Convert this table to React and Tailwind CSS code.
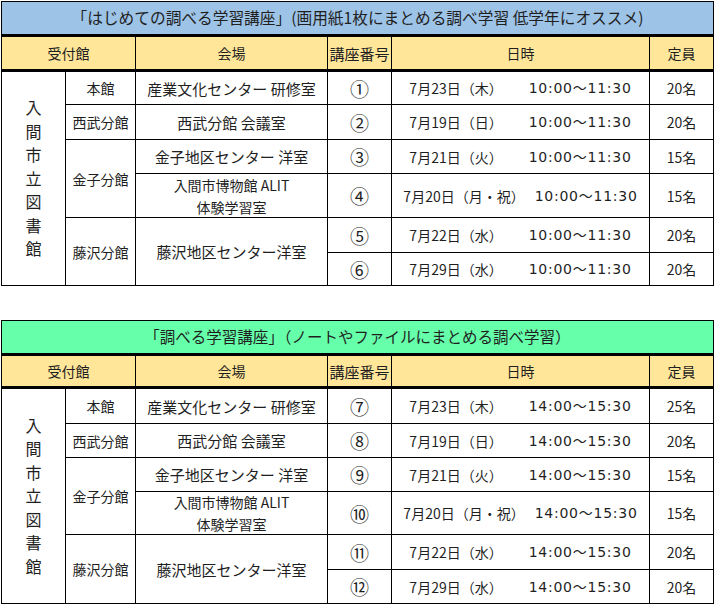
import React from "react";

const rows1 = [
  { num: "①", date: "7月23日（木）", time: "10:00～11:30", cap: "20名" },
  { num: "②", date: "7月19日（日）", time: "10:00～11:30", cap: "20名" },
  { num: "③", date: "7月21日（火）", time: "10:00～11:30", cap: "15名" },
  { num: "④", date: "7月20日（月・祝）", time: "10:00～11:30", cap: "15名", holiday: true },
  { num: "⑤", date: "7月22日（水）", time: "10:00～11:30", cap: "20名" },
  { num: "⑥", date: "7月29日（水）", time: "10:00～11:30", cap: "20名" },
];
const rows2 = [
  { num: "⑦", date: "7月23日（木）", time: "14:00～15:30", cap: "25名" },
  { num: "⑧", date: "7月19日（日）", time: "14:00～15:30", cap: "20名" },
  { num: "⑨", date: "7月21日（火）", time: "14:00～15:30", cap: "15名" },
  { num: "⑩", date: "7月20日（月・祝）", time: "14:00～15:30", cap: "15名", holiday: true },
  { num: "⑪", date: "7月22日（水）", time: "14:00～15:30", cap: "20名" },
  { num: "⑫", date: "7月29日（水）", time: "14:00～15:30", cap: "20名" },
];

const cell = "bg-white flex items-center justify-center";

function Num({ r }) {
  return <div className={`${cell} text-[19px]`}>{r.num}</div>;
}
function DateCell({ r }) {
  return (
    <div className={`${cell} ${r.holiday ? "gap-[10px]" : "gap-[26px]"} text-[14px]`}>
      <span>{r.date}</span>
      <span className="font-['DejaVu_Sans','Noto_Sans_CJK_JP',sans-serif] tracking-[0.75px]">{r.time}</span>
    </div>
  );
}
function Cap({ r }) {
  return <div className={`${cell} text-[14px]`}>{r.cap}</div>;
}

function Table({ title, bg, rows, rowsClass, className, titleSize }) {
  const hdr = "bg-[#FFE699] border-b-2 border-black flex items-center justify-center text-[14px]";
  return (
    <div
      className={`grid grid-cols-[63px_69px_191px_63px_257px_63px] gap-px bg-black p-px w-[713px] ml-px ${rowsClass} ${className}`}
    >
      <div className={`col-span-6 border-b-2 border-black flex items-center justify-center whitespace-nowrap ${titleSize} ${bg}`}>
        {title}
      </div>
      <div className={`${hdr} col-span-2`}>受付館</div>
      <div className={hdr}>会場</div>
      <div className={`${hdr} text-[15px] whitespace-nowrap`}>講座番号</div>
      <div className={hdr}>日時</div>
      <div className={hdr}>定員</div>

      <div className={`${cell} row-span-6 flex-col text-[16px] leading-[23.5px]`}>
        {"入間市立図書館".split("").map((c, i) => (
          <div key={i}>{c}</div>
        ))}
      </div>
      <div className={`${cell} text-[14px]`}>本館</div>
      <div className={`${cell} text-[15px]`}>産業文化センター 研修室</div>
      <Num r={rows[0]} />
      <DateCell r={rows[0]} />
      <Cap r={rows[0]} />

      <div className={`${cell} text-[14px]`}>西武分館</div>
      <div className={`${cell} text-[15px]`}>西武分館 会議室</div>
      <Num r={rows[1]} />
      <DateCell r={rows[1]} />
      <Cap r={rows[1]} />

      <div className={`${cell} row-span-2 text-[14px]`}>金子分館</div>
      <div className={`${cell} text-[15px]`}>金子地区センター 洋室</div>
      <Num r={rows[2]} />
      <DateCell r={rows[2]} />
      <Cap r={rows[2]} />

      <div className={`${cell} flex-col text-[14px] leading-[22px]`}>
        <div>入間市博物館 ALIT</div>
        <div>体験学習室</div>
      </div>
      <Num r={rows[3]} />
      <DateCell r={rows[3]} />
      <Cap r={rows[3]} />

      <div className={`${cell} row-span-2 text-[14px]`}>藤沢分館</div>
      <div className={`${cell} row-span-2 text-[15px]`}>藤沢地区センター洋室</div>
      <Num r={rows[4]} />
      <DateCell r={rows[4]} />
      <Cap r={rows[4]} />

      <Num r={rows[5]} />
      <DateCell r={rows[5]} />
      <Cap r={rows[5]} />
    </div>
  );
}

export default function App() {
  return (
    <div className="w-[716px] h-[606px] bg-white text-[#1f1f1f] font-['Noto_Sans_CJK_JP',sans-serif] leading-none overflow-hidden">
      <Table
        className="mt-px"
        title="「はじめての調べる学習講座」(画用紙1枚にまとめる調べ学習 低学年にオススメ)"
        bg="bg-[#9DC3E6]"
        titleSize="text-[15.7px]"
        rows={rows1}
        rowsClass="grid-rows-[34px_34px_32px_34px_33px_43px_34px_32px]"
      />
      <Table
        className="mt-[34px]"
        title="「調べる学習講座」（ノートやファイルにまとめる調べ学習）"
        bg="bg-[#66FFAA]"
        titleSize="text-[15.5px]"
        rows={rows2}
        rowsClass="grid-rows-[34px_32px_34px_33px_33px_42px_34px_33px]"
      />
    </div>
  );
}
